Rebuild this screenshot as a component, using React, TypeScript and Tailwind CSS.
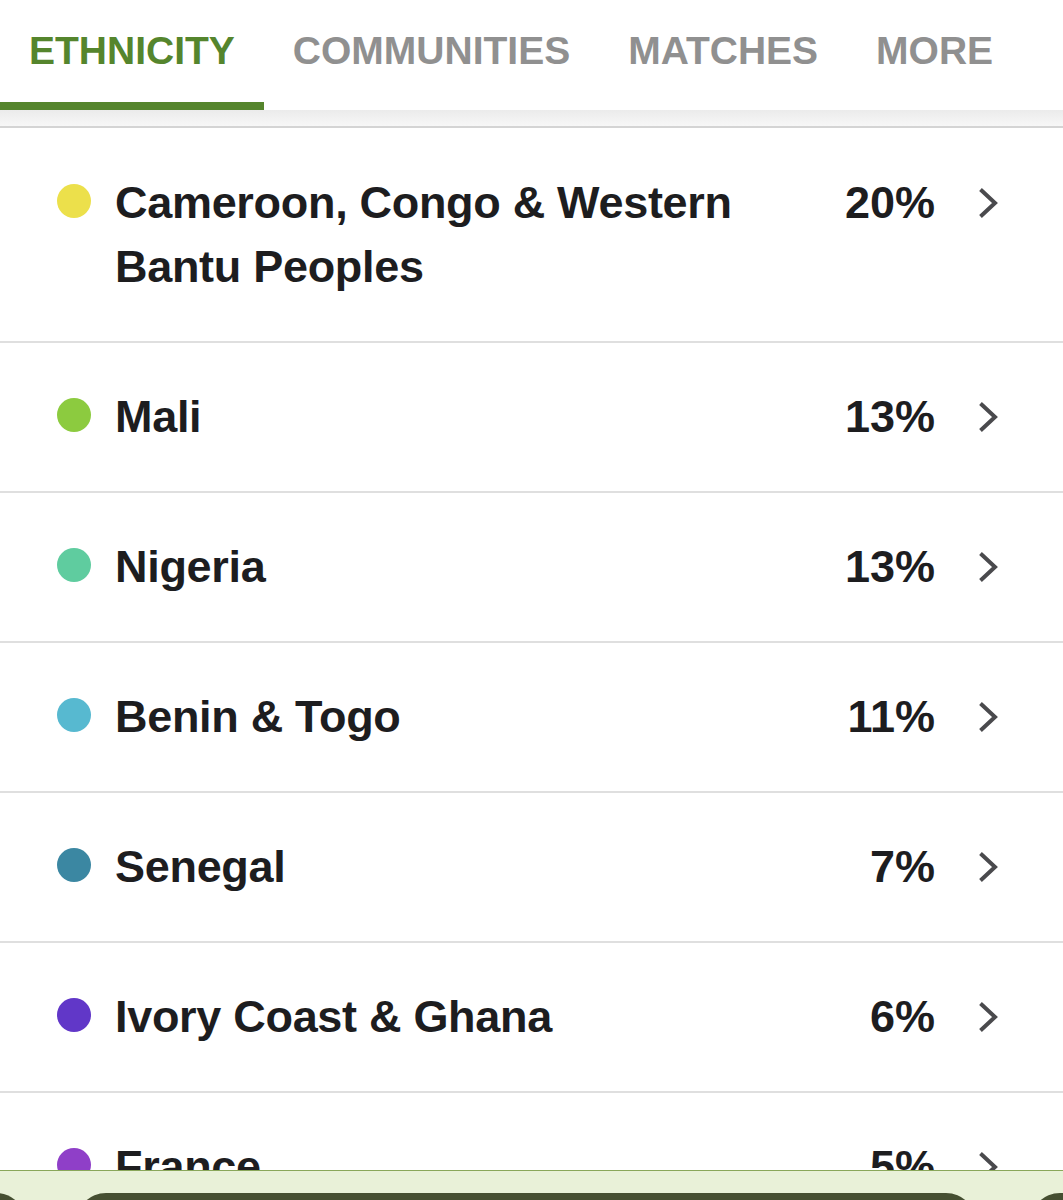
import React from "react";

type Region = { name: string; pct: string; color: string };

const regions: Region[] = [
  { name: "Cameroon, Congo & Western Bantu Peoples", pct: "20%", color: "#ece04b" },
  { name: "Mali", pct: "13%", color: "#8ccb3f" },
  { name: "Nigeria", pct: "13%", color: "#5fcc9f" },
  { name: "Benin & Togo", pct: "11%", color: "#57b9d0" },
  { name: "Senegal", pct: "7%", color: "#3b87a2" },
  { name: "Ivory Coast & Ghana", pct: "6%", color: "#6137c8" },
  { name: "France", pct: "5%", color: "#8f3fc8" },
];

const tabs = ["ETHNICITY", "COMMUNITIES", "MATCHES", "MORE"];

function Chevron() {
  return (
    <svg width="22" height="34" viewBox="0 0 22 34" fill="none">
      <path d="M3.5 3.5 L18 17 L3.5 30.5" stroke="#4a4a4d" strokeWidth="4" strokeLinejoin="miter" />
    </svg>
  );
}

function RegionRow({ r }: { r: Region }) {
  return (
    <div className="flex items-start border-b-2 border-[#dfdfdf] pt-[42px] pb-[42px] pl-[57px] pr-[64px]">
      <div className="flex h-[64px] w-[34px] shrink-0 items-center">
        <span className="-mt-[4px] block h-[34px] w-[34px] rounded-full" style={{ backgroundColor: r.color }} />
      </div>
      <div className="ml-[24px] min-w-0 flex-1">
        <div className="max-w-[650px] text-[45px] font-bold leading-[64px] tracking-[-0.3px] text-[#1d1d1f]">
          {r.name}
        </div>
      </div>
      <div className="ml-[30px] flex h-[64px] shrink-0 items-center">
        <span className="text-[45px] font-bold leading-[64px] text-[#1d1d1f]">{r.pct}</span>
        <span className="ml-[42px] flex items-center">
          <Chevron />
        </span>
      </div>
    </div>
  );
}

export default function App() {
  return (
    <div
      className="relative h-[1200px] w-[1063px] overflow-hidden bg-white"
      style={{ fontFamily: '"Liberation Sans", Arial, sans-serif' }}
    >
      {/* tab bar */}
      <div className="flex h-[110px] items-stretch bg-white">
        {tabs.map((t, i) => (
          <div key={t} className="relative flex items-center px-[29px]">
            <span
              className={
                "-mt-[8px] text-[39px] font-bold " +
                (i === 0 ? "text-[#55852d]" : "text-[#909090]")
              }
            >
              {t}
            </span>
            {i === 0 && <span className="absolute bottom-0 left-0 right-0 h-[8px] bg-[#55852d]" />}
          </div>
        ))}
      </div>
      <div className="h-[16px] bg-gradient-to-b from-[#ebebeb] to-[#f7f7f7]" />
      <div className="h-[2px] bg-[#d4d4d4]" />

      {/* ethnicity list */}
      <div className="pt-[1px]">
        {regions.map((r) => (
          <RegionRow key={r.name} r={r} />
        ))}
      </div>

      {/* bottom toolbar overlay */}
      <div className="absolute bottom-0 left-0 right-0 h-[30px] border-t border-[#8aa75a] bg-[#e9f1d8]">
        <div className="absolute left-[-40px] top-[22px] h-[60px] w-[66px] rounded-[30px] bg-[#464f31]" />
        <div className="absolute left-[76px] top-[22px] h-[60px] w-[900px] rounded-[30px] bg-[#464f31]" />
        <div className="absolute left-[1030px] top-[22px] h-[60px] w-[90px] rounded-[30px] bg-[#464f31]" />
      </div>
    </div>
  );
}
